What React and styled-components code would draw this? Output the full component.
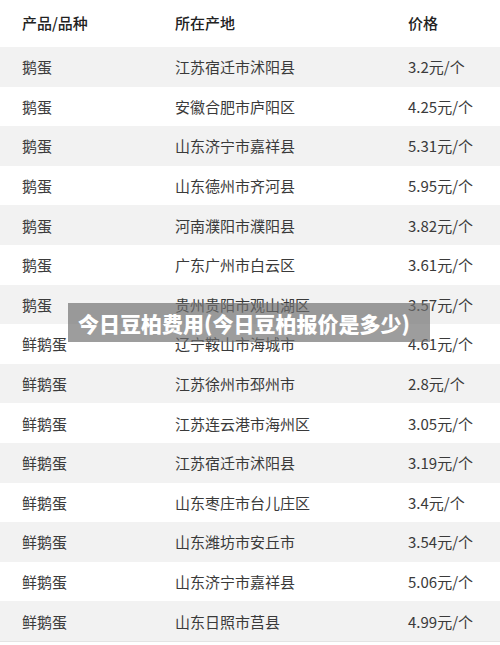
import React from "react";
import styled, { createGlobalStyle } from "styled-components";

const Global = createGlobalStyle`
  html, body { margin: 0; padding: 0; background: #fff; }
  body { font-family: "Noto Sans CJK SC", "Noto Sans", sans-serif; }
`;

const Page = styled.div`
  position: relative;
  width: 500px;
  height: 645px;
  overflow: hidden;
  background: #fff;
`;

const Table = styled.div`
  display: flex;
  flex-direction: column;
  border-bottom: 1px solid #e4e4e4;
`;

const Row = styled.div`
  display: grid;
  grid-template-columns: 153px 233px 1fr;
  align-items: center;
  padding-left: 22px;
  height: ${(p) => (p.$head ? "47px" : "39.6px")};
  background: ${(p) => (p.$alt ? "#f2f2f2" : "#fff")};
  color: ${(p) => (p.$head ? "#222" : "#3a3a3a")};
  font-size: 15px;
  font-weight: ${(p) => (p.$head ? 500 : 400)};
  box-sizing: border-box;
  padding-bottom: ${(p) => (p.$head ? "2px" : "0")};
`;

const Cell = styled.div`
  white-space: nowrap;
`;

const Banner = styled.div`
  position: absolute;
  left: 68px;
  top: 303px;
  width: 362px;
  height: 39px;
  background: rgba(110, 110, 110, 0.68);
  color: #fff;
  font-size: 21px;
  font-weight: 900;
  display: flex;
  align-items: center;
  padding-left: 10px;
  box-sizing: border-box;
  white-space: nowrap;
`;

const data = [
  ["鹅蛋", "江苏宿迁市沭阳县", "3.2元/个"],
  ["鹅蛋", "安徽合肥市庐阳区", "4.25元/个"],
  ["鹅蛋", "山东济宁市嘉祥县", "5.31元/个"],
  ["鹅蛋", "山东德州市齐河县", "5.95元/个"],
  ["鹅蛋", "河南濮阳市濮阳县", "3.82元/个"],
  ["鹅蛋", "广东广州市白云区", "3.61元/个"],
  ["鹅蛋", "贵州贵阳市观山湖区", "3.57元/个"],
  ["鲜鹅蛋", "辽宁鞍山市海城市", "4.61元/个"],
  ["鲜鹅蛋", "江苏徐州市邳州市", "2.8元/个"],
  ["鲜鹅蛋", "江苏连云港市海州区", "3.05元/个"],
  ["鲜鹅蛋", "江苏宿迁市沭阳县", "3.19元/个"],
  ["鲜鹅蛋", "山东枣庄市台儿庄区", "3.4元/个"],
  ["鲜鹅蛋", "山东潍坊市安丘市", "3.54元/个"],
  ["鲜鹅蛋", "山东济宁市嘉祥县", "5.06元/个"],
  ["鲜鹅蛋", "山东日照市莒县", "4.99元/个"],
];

export default function App() {
  return (
    <Page>
      <Global />
      <Table>
        <Row $head>
          <Cell>产品/品种</Cell>
          <Cell>所在产地</Cell>
          <Cell>价格</Cell>
        </Row>
        {data.map((r, i) => (
          <Row key={i} $alt={i % 2 === 0}>
            <Cell>{r[0]}</Cell>
            <Cell>{r[1]}</Cell>
            <Cell>{r[2]}</Cell>
          </Row>
        ))}
      </Table>
      <Banner>今日豆柏费用(今日豆柏报价是多少)</Banner>
    </Page>
  );
}
